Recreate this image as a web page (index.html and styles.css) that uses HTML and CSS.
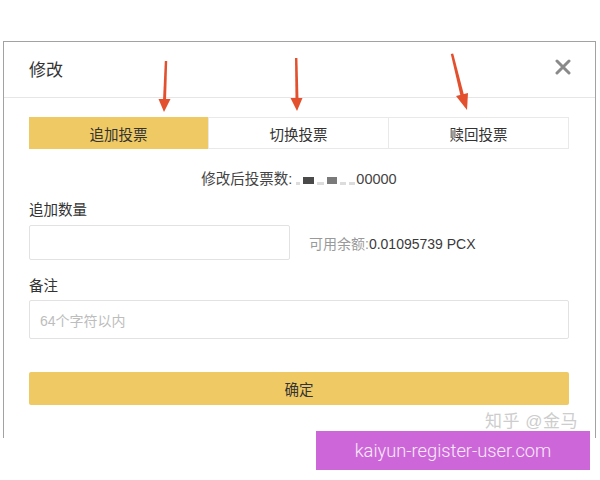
FILE: index.html
```html
<!DOCTYPE html>
<html lang="zh">
<head>
<meta charset="utf-8">
<link rel="stylesheet" href="styles.css">
</head>
<body>
<div class="modal">
  <div class="modal-header">
    <span class="title">修改</span>
    <svg class="close" width="16" height="16" viewBox="0 0 16 16"><path d="M2 2 L14 14 M14 2 L2 14" stroke="#8a8a8a" stroke-width="3" stroke-linecap="round"/></svg>
  </div>
  <div class="modal-body">
    <div class="tabs">
      <div class="tab active">追加投票</div>
      <div class="tab">切换投票</div>
      <div class="tab">赎回投票</div>
    </div>
    <div class="summary">修改后投票数:<span class="redact"><span class="blk light w4"></span><span class="blk dark w11"></span><span class="blk light w7"></span><span class="blk mid w10"></span><span class="blk light w6"></span><span class="blk light w6"></span></span>00000</div>
    <div class="label">追加数量</div>
    <div class="amount-row">
      <div class="input short"></div>
      <div class="balance"><span class="muted">可用余额:</span>0.01095739 PCX</div>
    </div>
    <div class="label label-note">备注</div>
    <div class="input wide"><span class="placeholder">64个字符以内</span></div>
    <div class="confirm">确定</div>
    <div class="watermark">知乎 @金马</div>
  </div>
</div>
<svg class="arrows" width="600" height="130" viewBox="0 0 600 130">
  <g fill="#e2502e">
    <polygon points="164.8,61 167.2,61 166,101 163,101"/>
    <polygon points="158.5,99 170.5,99 164,112"/>
    <polygon points="295,58 297.4,58 298.5,100 295.5,100"/>
    <polygon points="290.5,98 302.5,98 297,111"/>
    <polygon points="450.8,54 453.2,53.5 464.5,97 461,98"/>
    <polygon points="456,96 468,93 467,110"/>
  </g>
</svg>
<div class="site-tag">kaiyun-register-user.com</div>
</body>
</html>
```

FILE: styles.css
```css
html, body {
  margin: 0;
  padding: 0;
  background: #ffffff;
}
body {
  position: relative;
  width: 600px;
  height: 480px;
  overflow: hidden;
  font-family: "Liberation Sans", "Noto Sans CJK SC", sans-serif;
  color: #333333;
}
.modal {
  position: relative;
  margin: 41px 0 0 3px;
  width: 591px;
  height: 396px;
  border: 1px solid #a2a2a2;
  border-bottom: none;
  background: #ffffff;
}
.modal-header {
  height: 56px;
  border-bottom: 1px solid #e6e6e6;
  display: flex;
  align-items: center;
  justify-content: space-between;
  padding: 0 24px 0 25px;
  box-sizing: border-box;
}
.title {
  font-size: 17px;
  color: #333;
  position: relative;
  top: -1px;
}
.close {
  position: relative;
  top: -3px;
}
.modal-body {
  padding: 19px 26px 0 25px;
}
.tabs {
  display: flex;
  height: 32px;
  border: 1px solid #e9e9e9;
  box-sizing: border-box;
}
.tab {
  flex: 1;
  display: flex;
  align-items: center;
  justify-content: center;
  font-size: 14.5px;
  color: #333;
  border-left: 1px solid #e9e9e9;
}
.tab:first-child {
  border-left: none;
}
.tab.active {
  background: #efc963;
  margin: -1px 0 -1px -1px;
}
.summary {
  margin-top: 20px;
  line-height: 20px;
  text-align: center;
  font-size: 14.5px;
  color: #444;
}
.redact {
  display: inline-flex;
  align-items: center;
  gap: 3px;
  height: 20px;
  margin: 0 1px 0 4px;
  vertical-align: top;
  filter: blur(0.5px);
}
.blk {
  display: inline-block;
  height: 7px;
  margin-top: 3px;
}
.light { background: #dcdcdc; height: 3px; margin-top: 8px; }
.dark { background: #4a4a4a; }
.mid { background: #7a7a7a; }
.w4 { width: 4px; }
.w6 { width: 6px; }
.w7 { width: 7px; }
.w10 { width: 10px; }
.w11 { width: 11px; }
.label {
  margin-top: 11px;
  line-height: 20px;
  font-size: 14.5px;
  color: #333;
}
.label-note {
  margin-top: 16px;
}
.amount-row {
  display: flex;
  align-items: center;
  gap: 19px;
  margin-top: 5px;
}
.input {
  border: 1px solid #e2e2e2;
  border-radius: 2px;
  box-sizing: border-box;
  background: #fff;
}
.input.short {
  width: 261px;
  height: 35px;
}
.input.wide {
  margin-top: 4px;
  height: 39px;
  display: flex;
  align-items: center;
  padding-left: 10px;
}
.placeholder {
  font-size: 14px;
  color: #bdbdbd;
}
.balance {
  font-size: 14px;
  color: #3a3a3a;
}
.muted {
  color: #9a9a9a;
}
.confirm {
  margin-top: 33px;
  height: 33px;
  background: #efc963;
  border-radius: 2px;
  display: flex;
  align-items: center;
  justify-content: center;
  font-size: 14.5px;
  color: #333;
}
.watermark {
  position: absolute;
  right: 17px;
  top: 365px;
  font-size: 17px;
  color: #cdcdcd;
  letter-spacing: 0.5px;
}
.arrows {
  position: absolute;
  left: 0;
  top: 0;
}
.site-tag {
  position: absolute;
  left: 316px;
  top: 431px;
  width: 274px;
  height: 39px;
  background: #cd67d9;
  color: #f8ecfa;
  font-family: Roboto, "Noto Sans", sans-serif;
  font-weight: 300;
  font-size: 18.3px;
  display: flex;
  align-items: center;
  justify-content: center;
}
```
